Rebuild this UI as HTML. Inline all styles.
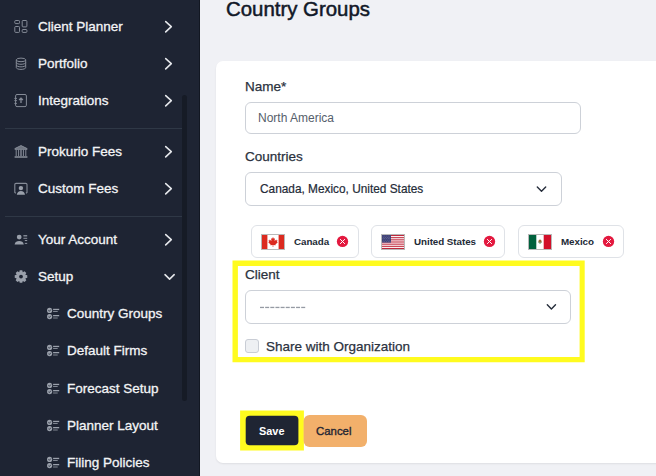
<!DOCTYPE html>
<html><head><meta charset="utf-8">
<style>
*{box-sizing:border-box;margin:0;padding:0}
html,body{width:656px;height:476px;overflow:hidden;background:#f0f1f5;font-family:"Liberation Sans",sans-serif;position:relative}
.sb{position:absolute;left:0;top:0;width:200px;height:476px;background:#1e2433;border-right:1px solid #121722}
.sep{position:absolute;left:5px;width:177px;height:1px;background:#2f3846}
.scroll{position:absolute;left:182px;top:95px;width:5px;height:306px;border-radius:3px;background:#161b26}
.it{position:absolute;left:38px;font-size:13.5px;line-height:16px;color:#f3f4f6;white-space:nowrap;-webkit-text-stroke:0.3px #f3f4f6}
.sub{left:67px}
.ic{position:absolute;overflow:visible}
.chev{position:absolute;left:163px;width:12px;height:14px}
.main{position:absolute;left:200px;top:0;width:456px;height:476px}
.title{position:absolute;left:226px;top:-3px;font-size:20.4px;line-height:24px;color:#111827;white-space:nowrap;-webkit-text-stroke:0.5px #111827}
.card{position:absolute;left:216px;top:61px;width:460px;height:402px;background:#fff;border-radius:7px;box-shadow:0 1px 2px rgba(0,0,0,0.08)}
.lbl{position:absolute;left:245px;font-size:13.5px;line-height:16px;color:#2b3240;white-space:nowrap;-webkit-text-stroke:0.25px #2b3240}
.inp{position:absolute;border:1px solid #cdd1d8;border-radius:6px;background:#fff}
.txt{position:absolute;white-space:nowrap}
.chip{position:absolute;top:225px;height:33px;border:1px solid #dfe2e7;border-radius:6px;background:#fff}
.flag{position:absolute;top:234px;width:24px;height:16px;overflow:hidden}
.ctext{position:absolute;font-weight:bold;font-size:9.8px;line-height:12px;color:#222a36;white-space:nowrap;letter-spacing:-0.05px}
.xb{position:absolute;top:236px;width:11px;height:11px;border-radius:50%;background:#e11d48}
.yl{position:absolute;border:5px solid #fffb1f}
</style></head><body>
<div class="sb">
  <div class="scroll"></div>
  <div class="sep" style="top:128px"></div>
  <div class="sep" style="top:216px"></div>
  <!-- icons -->
  <svg class="ic" style="left:13px;top:19px" width="16" height="16" viewBox="0 0 16 16" fill="none" stroke="#858b97" stroke-width="1">
    <rect x="1.8" y="1.5" width="4.7" height="3.1" rx="0.8"/>
    <rect x="1.8" y="7.5" width="4.7" height="5.9" rx="0.8"/>
    <rect x="9.2" y="1.5" width="4.7" height="6.4" rx="0.8"/>
    <rect x="9.2" y="10.5" width="4.7" height="2.9" rx="0.8"/>
  </svg>
  <div class="it" style="top:19px">Client Planner</div>
  <svg class="chev" style="top:20px" viewBox="0 0 12 14" fill="none" stroke="#e5e7eb" stroke-width="1.6" stroke-linecap="round" stroke-linejoin="round"><path d="M2.7 1.6 L8.3 6.6 L2.7 11.9"/></svg>

  <svg class="ic" style="left:14px;top:56px" width="14" height="16" viewBox="0 0 14 16" fill="none" stroke="#858b97" stroke-width="1">
    <ellipse cx="7" cy="3.9" rx="4.7" ry="1.8"/>
    <path d="M2.3 3.9 V11.6 C2.3 12.6 4.4 13.4 7 13.4 C9.6 13.4 11.7 12.6 11.7 11.6 V3.9"/>
    <path d="M2.3 6.5 C2.3 7.5 4.4 8.3 7 8.3 C9.6 8.3 11.7 7.5 11.7 6.5"/>
    <path d="M2.3 9.05 C2.3 10.05 4.4 10.85 7 10.85 C9.6 10.85 11.7 10.05 11.7 9.05"/>
  </svg>
  <div class="it" style="top:56px">Portfolio</div>
  <svg class="chev" style="top:57px" viewBox="0 0 12 14" fill="none" stroke="#e5e7eb" stroke-width="1.6" stroke-linecap="round" stroke-linejoin="round"><path d="M2.7 1.6 L8.3 6.6 L2.7 11.9"/></svg>

  <svg class="ic" style="left:14px;top:93px" width="14" height="15" viewBox="0 0 14 15" fill="none" stroke="#858b97" stroke-width="1">
    <rect x="1.6" y="1.5" width="10.8" height="12.1" rx="1.4"/>
    <path d="M0.4 5.4 H2.9 M0.4 7.6 H2.9 M0.4 10.4 H2.9" />
    <path d="M7 9.9 V5.2 M5.1 7 L7 5.1 L8.9 7" stroke-width="1.3"/>
  </svg>
  <div class="it" style="top:93px">Integrations</div>
  <svg class="chev" style="top:94px" viewBox="0 0 12 14" fill="none" stroke="#e5e7eb" stroke-width="1.6" stroke-linecap="round" stroke-linejoin="round"><path d="M2.7 1.6 L8.3 6.6 L2.7 11.9"/></svg>

  <svg class="ic" style="left:14px;top:145px" width="14" height="14" viewBox="0 0 14 14" fill="none" stroke="#858b97" stroke-width="1">
    <path d="M0.9 3.6 L7 0.6 L13.1 3.6 V4.3 H0.9 Z" fill="#6f7581"/>
    <path d="M2.2 4.6 V11 M4.6 4.6 V11 M9.4 4.6 V11 M11.8 4.6 V11" />
    <rect x="6.3" y="4.6" width="1.4" height="6.4" fill="#858b97" stroke="none"/>
    <path d="M0.6 12 H13.4" stroke-width="1.6"/>
  </svg>
  <div class="it" style="top:144px">Prokurio Fees</div>
  <svg class="chev" style="top:145px" viewBox="0 0 12 14" fill="none" stroke="#e5e7eb" stroke-width="1.6" stroke-linecap="round" stroke-linejoin="round"><path d="M2.7 1.6 L8.3 6.6 L2.7 11.9"/></svg>

  <svg class="ic" style="left:14px;top:182px" width="14" height="14" viewBox="0 0 14 14" fill="none" stroke="#858b97" stroke-width="1.1">
    <path d="M1.8 11.3 L0.8 10.5 V2.6 C0.8 1.9 1.3 1.4 2 1.4 H11.8 C12.5 1.4 13 1.9 13 2.6 V10.5 L12 11.3"/>
    <circle cx="6.9" cy="6.1" r="2.2" fill="#9aa0ab" stroke="none"/>
    <path d="M2.8 12.8 C3.1 10.3 4.7 9 6.9 9 C9.1 9 10.7 10.3 11 12.8 Z" fill="#9aa0ab" stroke="none"/>
  </svg>
  <div class="it" style="top:181px">Custom Fees</div>
  <svg class="chev" style="top:182px" viewBox="0 0 12 14" fill="none" stroke="#e5e7eb" stroke-width="1.6" stroke-linecap="round" stroke-linejoin="round"><path d="M2.7 1.6 L8.3 6.6 L2.7 11.9"/></svg>

  <svg class="ic" style="left:14px;top:234px" width="14" height="12" viewBox="0 0 14 12" fill="#9aa0ab" stroke="none">
    <circle cx="5.2" cy="3.1" r="2.4"/>
    <path d="M0.6 10.4 C1.1 8 2.9 7 5.2 7 C7.5 7 9.3 8 9.8 10.4 Z"/>
    <rect x="9.4" y="1.2" width="3.8" height="1.2"/>
    <rect x="9.4" y="3.8" width="3.8" height="0.9"/>
    <rect x="10.8" y="6.1" width="2.4" height="0.9"/>
    <rect x="10.8" y="8.9" width="2.4" height="0.9"/>
  </svg>
  <div class="it" style="top:232px">Your Account</div>
  <svg class="chev" style="top:233px" viewBox="0 0 12 14" fill="none" stroke="#e5e7eb" stroke-width="1.6" stroke-linecap="round" stroke-linejoin="round"><path d="M2.7 1.6 L8.3 6.6 L2.7 11.9"/></svg>

  <svg class="ic" style="left:14px;top:269px" width="14" height="15" viewBox="0 0 14 15">
    <path fill="#9aa0ab" d="M5.73 1.33 L8.27 1.33 L8.80 3.26 L10.54 2.27 L12.33 4.06 L11.34 5.80 L13.27 6.33 L13.27 8.87 L11.34 9.40 L12.33 11.14 L10.54 12.93 L8.80 11.94 L8.27 13.87 L5.73 13.87 L5.20 11.94 L3.46 12.93 L1.67 11.14 L2.66 9.40 L0.73 8.87 L0.73 6.33 L2.66 5.80 L1.67 4.06 L3.46 2.27 L5.20 3.26 Z"/>
    <circle cx="7" cy="7.6" r="1.9" fill="#1e2433"/>
  </svg>
  <div class="it" style="top:269px">Setup</div>
  <svg class="ic" style="left:163px;top:270px" width="14" height="12" viewBox="0 0 14 12" fill="none" stroke="#e5e7eb" stroke-width="1.6" stroke-linecap="round" stroke-linejoin="round"><path d="M2 4.7 L6.6 9.1 L11.2 4.7"/></svg>

  <svg class="ic" style="left:46px;top:307px" width="14" height="13" viewBox="0 0 14 13"><g fill="#9aa0ab"><circle cx="3.6" cy="3.4" r="2.6"/><circle cx="3.6" cy="9.6" r="2.6"/><rect x="7.1" y="1.8" width="6.1" height="1.3"/><rect x="7.1" y="4.1" width="4.6" height="0.8"/><rect x="7.1" y="8" width="6.1" height="1.3"/><rect x="7.1" y="10.6" width="4.6" height="0.8"/></g><path d="M2.4 3.4 L3.3 4.3 L4.9 2.5 M2.4 9.6 L3.3 10.5 L4.9 8.7" stroke="#1e2433" stroke-width="0.8" fill="none"/></svg>
  <div class="it sub" style="top:306px">Country Groups</div>
  <svg class="ic" style="left:46px;top:344px" width="14" height="13" viewBox="0 0 14 13"><g fill="#9aa0ab"><circle cx="3.6" cy="3.4" r="2.6"/><circle cx="3.6" cy="9.6" r="2.6"/><rect x="7.1" y="1.8" width="6.1" height="1.3"/><rect x="7.1" y="4.1" width="4.6" height="0.8"/><rect x="7.1" y="8" width="6.1" height="1.3"/><rect x="7.1" y="10.6" width="4.6" height="0.8"/></g><path d="M2.4 3.4 L3.3 4.3 L4.9 2.5 M2.4 9.6 L3.3 10.5 L4.9 8.7" stroke="#1e2433" stroke-width="0.8" fill="none"/></svg>
  <div class="it sub" style="top:343px">Default Firms</div>
  <svg class="ic" style="left:46px;top:382px" width="14" height="13" viewBox="0 0 14 13"><g fill="#9aa0ab"><circle cx="3.6" cy="3.4" r="2.6"/><circle cx="3.6" cy="9.6" r="2.6"/><rect x="7.1" y="1.8" width="6.1" height="1.3"/><rect x="7.1" y="4.1" width="4.6" height="0.8"/><rect x="7.1" y="8" width="6.1" height="1.3"/><rect x="7.1" y="10.6" width="4.6" height="0.8"/></g><path d="M2.4 3.4 L3.3 4.3 L4.9 2.5 M2.4 9.6 L3.3 10.5 L4.9 8.7" stroke="#1e2433" stroke-width="0.8" fill="none"/></svg>
  <div class="it sub" style="top:381px">Forecast Setup</div>
  <svg class="ic" style="left:46px;top:419px" width="14" height="13" viewBox="0 0 14 13"><g fill="#9aa0ab"><circle cx="3.6" cy="3.4" r="2.6"/><circle cx="3.6" cy="9.6" r="2.6"/><rect x="7.1" y="1.8" width="6.1" height="1.3"/><rect x="7.1" y="4.1" width="4.6" height="0.8"/><rect x="7.1" y="8" width="6.1" height="1.3"/><rect x="7.1" y="10.6" width="4.6" height="0.8"/></g><path d="M2.4 3.4 L3.3 4.3 L4.9 2.5 M2.4 9.6 L3.3 10.5 L4.9 8.7" stroke="#1e2433" stroke-width="0.8" fill="none"/></svg>
  <div class="it sub" style="top:418px">Planner Layout</div>
  <svg class="ic" style="left:46px;top:456px" width="14" height="13" viewBox="0 0 14 13"><g fill="#9aa0ab"><circle cx="3.6" cy="3.4" r="2.6"/><circle cx="3.6" cy="9.6" r="2.6"/><rect x="7.1" y="1.8" width="6.1" height="1.3"/><rect x="7.1" y="4.1" width="4.6" height="0.8"/><rect x="7.1" y="8" width="6.1" height="1.3"/><rect x="7.1" y="10.6" width="4.6" height="0.8"/></g><path d="M2.4 3.4 L3.3 4.3 L4.9 2.5 M2.4 9.6 L3.3 10.5 L4.9 8.7" stroke="#1e2433" stroke-width="0.8" fill="none"/></svg>
  <div class="it sub" style="top:455px">Filing Policies</div>
</div>

<div class="title">Country Groups</div>
<div class="card"></div>

<div class="lbl" style="top:79px">Name*</div>
<div class="inp" style="left:245px;top:102px;width:336px;height:32px"></div>
<div class="txt" style="left:258px;top:110px;font-size:12px;line-height:16px;color:#565e6b">North America</div>

<div class="lbl" style="top:149px">Countries</div>
<div class="inp" style="left:245px;top:172px;width:317px;height:34px"></div>
<div class="txt" style="left:260px;top:181px;font-size:11.85px;line-height:16px;color:#242b38;-webkit-text-stroke:0.2px #242b38">Canada, Mexico, United States</div>
<svg class="ic" style="left:535px;top:183px" width="12" height="10" viewBox="0 0 12 10" fill="none" stroke="#252c3a" stroke-width="1.4" stroke-linecap="round" stroke-linejoin="round"><path d="M2.3 4 L6.5 8.2 L10.7 4"/></svg>

<!-- chips -->
<div class="chip" style="left:251px;width:108px"></div>
<div class="chip" style="left:371px;width:134px"></div>
<div class="chip" style="left:518px;width:106px"></div>

<div class="ctext" style="left:294px;top:235.5px">Canada</div>
<div class="ctext" style="left:414px;top:235.5px">United States</div>
<div class="ctext" style="left:561px;top:235.5px">Mexico</div>


<svg class="ic" style="left:337px;top:236px" width="11" height="11" viewBox="0 0 11 11"><circle cx="5.5" cy="5.4" r="5.65" fill="#e3193f"/><path d="M3.4 3.4 L7.6 7.6 M7.6 3.4 L3.4 7.6" stroke="#fff" stroke-width="1" stroke-linecap="round"/></svg>
<svg class="ic" style="left:484px;top:236px" width="11" height="11" viewBox="0 0 11 11"><circle cx="5.5" cy="5.4" r="5.65" fill="#e3193f"/><path d="M3.4 3.4 L7.6 7.6 M7.6 3.4 L3.4 7.6" stroke="#fff" stroke-width="1" stroke-linecap="round"/></svg>
<svg class="ic" style="left:603px;top:236px" width="11" height="11" viewBox="0 0 11 11"><circle cx="5.5" cy="5.4" r="5.65" fill="#e3193f"/><path d="M3.4 3.4 L7.6 7.6 M7.6 3.4 L3.4 7.6" stroke="#fff" stroke-width="1" stroke-linecap="round"/></svg>
<svg class="ic" style="left:261px;top:234px" width="24" height="16" viewBox="0 0 24 16">
<rect x="0.5" y="0.5" width="23" height="15" fill="#fff" stroke="#b8b8b8" stroke-width="1"/>
<rect x="1" y="1" width="5.4" height="14" fill="#db2a1f"/>
<rect x="17.6" y="1" width="5.4" height="14" fill="#db2a1f"/>
<path d="M12 3 L12.9 4.7 L13.9 4.3 L13.6 7 L15.3 5.6 L15.6 6.5 L16.5 6.3 L16 8 L16.8 8.5 L14.5 10.3 L14.7 11.2 L12.3 10.9 L12.3 13 L11.7 13 L11.7 10.9 L9.3 11.2 L9.5 10.3 L7.2 8.5 L8 8 L7.5 6.3 L8.4 6.5 L8.7 5.6 L10.4 7 L10.1 4.3 L11.1 4.7 Z" fill="#db2a1f"/>
</svg>
<svg class="ic" style="left:381px;top:234px" width="24" height="16" viewBox="0 0 24 16">
<rect x="0.5" y="0.5" width="23" height="15" fill="#fff" stroke="#b8b8b8" stroke-width="1"/>
<rect x="1" y="1.000" width="22" height="1.077" fill="#c0283c"/><rect x="1" y="3.154" width="22" height="1.077" fill="#c0283c"/><rect x="1" y="5.308" width="22" height="1.077" fill="#c0283c"/><rect x="1" y="7.462" width="22" height="1.077" fill="#c0283c"/><rect x="1" y="9.615" width="22" height="1.077" fill="#c0283c"/><rect x="1" y="11.769" width="22" height="1.077" fill="#c0283c"/><rect x="1" y="13.923" width="22" height="1.077" fill="#c0283c"/>
<rect x="1" y="1" width="9" height="7.6" fill="#3f4277"/>
<g fill="#8b8fb3"><circle cx="2.00" cy="2.00" r="0.35"/><circle cx="3.75" cy="2.00" r="0.35"/><circle cx="5.50" cy="2.00" r="0.35"/><circle cx="7.25" cy="2.00" r="0.35"/><circle cx="9.00" cy="2.00" r="0.35"/><circle cx="2.85" cy="3.35" r="0.35"/><circle cx="4.60" cy="3.35" r="0.35"/><circle cx="6.35" cy="3.35" r="0.35"/><circle cx="8.10" cy="3.35" r="0.35"/><circle cx="2.00" cy="4.70" r="0.35"/><circle cx="3.75" cy="4.70" r="0.35"/><circle cx="5.50" cy="4.70" r="0.35"/><circle cx="7.25" cy="4.70" r="0.35"/><circle cx="9.00" cy="4.70" r="0.35"/><circle cx="2.85" cy="6.05" r="0.35"/><circle cx="4.60" cy="6.05" r="0.35"/><circle cx="6.35" cy="6.05" r="0.35"/><circle cx="8.10" cy="6.05" r="0.35"/><circle cx="2.00" cy="7.40" r="0.35"/><circle cx="3.75" cy="7.40" r="0.35"/><circle cx="5.50" cy="7.40" r="0.35"/><circle cx="7.25" cy="7.40" r="0.35"/><circle cx="9.00" cy="7.40" r="0.35"/></g>
</svg>
<svg class="ic" style="left:528px;top:234px" width="24" height="16" viewBox="0 0 24 16">
<rect x="0.5" y="0.5" width="23" height="15" fill="#fff" stroke="#b8b8b8" stroke-width="1"/>
<rect x="1" y="1" width="7.3" height="14" fill="#00613d"/>
<rect x="15.7" y="1" width="7.3" height="14" fill="#d2102a"/>
<ellipse cx="12" cy="7.3" rx="1.5" ry="1.7" fill="#9a6a3a"/>
<path d="M10.3 8.3 Q12 10.6 13.7 8.3" stroke="#6aa080" stroke-width="0.9" fill="none"/>
</svg>
<!-- yellow highlight client -->
<svg class="ic" style="left:0;top:0" width="656" height="476"><path fill="#fffb1f" fill-rule="evenodd" d="M232.5 260.5 H584.7 V362.3 H232.5 Z M237.9 265.9 V357.1 H579.6 V265.9 Z"/></svg>
<div class="lbl" style="top:267px">Client</div>
<div class="inp" style="left:245px;top:290px;width:326px;height:34px"></div>
<svg class="ic" style="left:260px;top:306px" width="47" height="3" viewBox="0 0 47 3"><g fill="#959aa3"><rect x="0.00" y="0.8" width="4" height="1.3"/><rect x="5.15" y="0.8" width="4" height="1.3"/><rect x="10.30" y="0.8" width="4" height="1.3"/><rect x="15.45" y="0.8" width="4" height="1.3"/><rect x="20.60" y="0.8" width="4" height="1.3"/><rect x="25.75" y="0.8" width="4" height="1.3"/><rect x="30.90" y="0.8" width="4" height="1.3"/><rect x="36.05" y="0.8" width="4" height="1.3"/><rect x="41.20" y="0.8" width="4" height="1.3"/></g></svg>
<svg class="ic" style="left:545px;top:302px" width="12" height="10" viewBox="0 0 12 10" fill="none" stroke="#252c3a" stroke-width="1.4" stroke-linecap="round" stroke-linejoin="round"><path d="M2.3 2.8 L6.4 6.9 L10.5 2.8"/></svg>

<div style="position:absolute;left:245px;top:339px;width:14px;height:14px;border:1px solid #c9cdd5;border-radius:3px;background:#eef0f3"></div>
<div class="lbl" style="left:266px;top:339px">Share with Organization</div>

<!-- buttons -->
<svg class="ic" style="left:0;top:0" width="656" height="476"><path fill="#fffb1f" d="M240.1 410.5 H303.9 V450.4 H240.1 Z"/><rect x="245.7" y="415.7" width="52.7" height="29.5" rx="4" fill="#1f2533"/><rect x="303.6" y="415" width="63.4" height="32.1" rx="6" fill="#f2b06b"/></svg>

<div class="txt" style="left:259px;top:424px;font-size:10.9px;line-height:14px;font-weight:bold;color:#fff">Save</div>

<div class="txt" style="left:316px;top:424px;font-size:11.4px;line-height:14px;color:#1f2533;-webkit-text-stroke:0.35px #1f2533">Cancel</div>

</body></html>
